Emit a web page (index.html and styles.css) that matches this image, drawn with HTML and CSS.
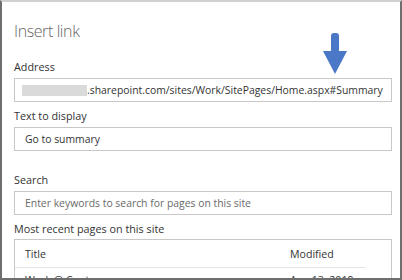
FILE: index.html
```html
<!DOCTYPE html>
<html lang="en">
<head>
  <meta charset="UTF-8" />
  <title>Insert link</title>
  <link rel="stylesheet" href="styles.css">
</head>
<body>
  <div class="frame">
    <h1 class="title">Insert link</h1>

    <svg class="arrow" width="26" height="42" viewBox="0 0 26 42">
      <rect x="9" y="0" width="8" height="20" rx="3" fill="#4a78c6"/>
      <polygon points="1,18 25,18 13,41" fill="#4a78c6"/>
    </svg>

    <label class="label">Address</label>
    <div class="field">
      <span class="blur"></span><span class="url">.sharepoint.com/sites/Work/SitePages/Home.aspx#Summary</span>
    </div>

    <label class="label">Text to display</label>
    <div class="field"><span class="value">Go to summary</span></div>

    <label class="label spaced">Search</label>
    <div class="field"><span class="placeholder">Enter keywords to search for pages on this site</span></div>

    <label class="label last">Most recent pages on this site</label>
    <div class="table">
      <div class="row head">
        <span class="col-title">Title</span>
        <span class="col-mod">Modified</span>
      </div>
      <div class="row item">
        <span class="col-title">Work @ Contoso</span>
        <span class="col-mod">Aug 13, 2019</span>
      </div>
    </div>
  </div>
</body>
</html>
```

FILE: styles.css
```css
html, body {
  margin: 0;
  padding: 0;
  background: #fff;
}
.frame {
  position: relative;
  box-sizing: border-box;
  width: 402px;
  height: 280px;
  overflow: hidden;
  border-top: 2px solid #d0d0d0;
  border-left: 2px solid #6e6e6e;
  border-right: 2px solid #6e6e6e;
  border-bottom: 2px solid #6e6e6e;
  padding: 0 8px 0 12px;
  font-family: "Open Sans", "Noto Sans", sans-serif;
  color: #333;
}
.title {
  margin: 0;
  padding-top: 17px;
  height: 39px;
  font-size: 16px;
  font-weight: 300;
  line-height: 24px;
  letter-spacing: -0.4px;
  color: #666;
}
.arrow {
  position: absolute;
  left: 320px;
  top: 31px;
}
.label {
  display: block;
  font-size: 10.8px;
  line-height: 16px;
  padding-top: 1px;
  height: 15px;
  margin-bottom: 4px;
  color: #333;
}
.label.spaced {
  margin-top: 20px;
}
.label.last {
  margin-bottom: 3px;
}
.field {
  box-sizing: border-box;
  height: 24px;
  border: 1px solid #c8c8c8;
  display: flex;
  align-items: center;
  padding-left: 10px;
  font-size: 10.4px;
  margin-bottom: 5px;
  white-space: nowrap;
  overflow: hidden;
}
.blur {
  flex-shrink: 0;
  width: 65px;
  height: 11px;
  margin-left: -3px;
  background: #dadada;
}
.value {
  color: #333;
}
.placeholder {
  color: #6a6a6a;
}
.table {
  border: 1px solid #c8c8c8;
  height: 60px;
  padding-right: 25px;
  font-size: 10.6px;
}
.row {
  display: flex;
  height: 27px;
  align-items: center;
  padding-left: 10px;
}
.row.head {
  border-bottom: 1px solid #e6e6e6;
}
.row.item {
  align-items: flex-start;
  padding-top: 4px;
  line-height: 16px;
}
.col-title {
  width: 265px;
}
```
